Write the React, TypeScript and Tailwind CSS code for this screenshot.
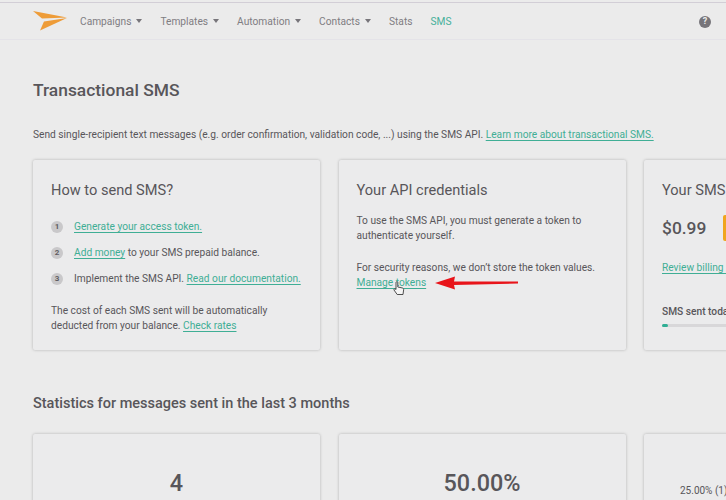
const navItems = [
  { label: 'Campaigns', caret: true },
  { label: 'Templates', caret: true },
  { label: 'Automation', caret: true },
  { label: 'Contacts', caret: true },
  { label: 'Stats', caret: false },
];

const linkClass = 'text-[#3fae95] underline decoration-[#3fae95] underline-offset-2';

function Caret() {
  return <span className="ml-[5px] h-0 w-0 border-x-[3.5px] border-t-[4px] border-x-transparent border-t-[#77757a]" />;
}

function Logo() {
  return (
    <svg width="35" height="20" viewBox="0 0 35 20" className="shrink-0">
      <path d="M0 0 L34 6.5 L9 7.5 Z" fill="#ee9c38" />
      <path d="M7 19.5 L34 7 L11 10.5 Z" fill="#ee9c38" />
    </svg>
  );
}

function StepBadge({ n }: { n: number }) {
  return (
    <span className="flex h-[12px] w-[12px] shrink-0 items-center justify-center rounded-full bg-[#c9c8ca] text-[8px] font-bold text-[#5f5d62]">
      {n}
    </span>
  );
}

function Card({ children, className = '' }: { children?: React.ReactNode; className?: string }) {
  return (
    <div className={`relative w-[287px] shrink-0 rounded-[2px] bg-[#ebebec] shadow-[0_0_3px_rgba(0,0,0,0.25)] ${className}`}>
      {children}
    </div>
  );
}

export default function App() {
  return (
    <div className="h-[500px] w-[726px] overflow-hidden bg-[#ebebeb] font-['Roboto',sans-serif] text-[#58565a]">
      {/* Header */}
      <div className="mt-[2px] h-[1px] bg-[#d2ced6]" />
      <div className="flex h-[37px] items-center border-b border-[#e4e3e8] pl-[33px] pr-[15px]">
        <Logo />
        <nav className="ml-[12px] flex items-center gap-[18px] pt-[1px] text-[10.2px] text-[#7f7d82]">
          {navItems.map((item) => (
            <span key={item.label} className="flex items-center">
              {item.label}
              {item.caret && <Caret />}
            </span>
          ))}
          <span className="text-[#46b09a]">SMS</span>
        </nav>
        <span className="ml-auto mt-[1px] flex h-[12px] w-[12px] items-center justify-center rounded-full bg-[#77757a] text-[9px] font-bold text-[#ebebeb]">
          ?
        </span>
      </div>

      <div className="pl-[33px]">
        <h1 className="mt-[39px] text-[17.4px] font-medium leading-[22px]">Transactional SMS</h1>
        <p className="mt-[27px] whitespace-nowrap text-[10.2px] leading-[14px]">
          Send single-recipient text messages (e.g. order confirmation, validation code, ...) using the SMS API.{' '}
          <span className={linkClass}>Learn more about transactional SMS.</span>
        </p>

        <div className="mt-[18px] flex gap-[18.5px]">
          <Card className="h-[190px] px-[18px] pt-[21px]">
            <h2 className="text-[14.6px] leading-[18px]">How to send SMS?</h2>
            <div className="mt-[20px] flex flex-col gap-[11px] text-[10.2px] leading-[15px]">
              <div className="flex items-center gap-[11px]">
                <StepBadge n={1} />
                <span className={linkClass}>Generate your access token.</span>
              </div>
              <div className="flex items-center gap-[11px]">
                <StepBadge n={2} />
                <span>
                  <span className={linkClass}>Add money</span> to your SMS prepaid balance.
                </span>
              </div>
              <div className="flex items-center gap-[11px]">
                <StepBadge n={3} />
                <span>
                  Implement the SMS API. <span className={linkClass}>Read our documentation.</span>
                </span>
              </div>
            </div>
            <p className="mt-[18px] text-[10.2px] leading-[14.5px]">
              The cost of each SMS sent will be automatically deducted from your balance.{' '}
              <span className={linkClass}>Check rates</span>
            </p>
          </Card>

          <Card className="h-[190px] px-[18px] pt-[21px]">
            <h2 className="text-[14.6px] leading-[18px]">Your API credentials</h2>
            <p className="mt-[14px] text-[10.2px] leading-[15px]">
              To use the SMS API, you must generate a token to authenticate yourself.
            </p>
            <p className="mt-[17px] text-[10.2px] leading-[15px]">
              For security reasons, we don’t store the token values.
              <br />
              <span className={linkClass}>Manage tokens</span>
            </p>
            {/* annotation arrow and cursor */}
            <svg width="84" height="14" viewBox="0 0 84 14" className="absolute left-[96px] top-[116px]">
              <path d="M0 7 L20 0.5 L19 5.5 L83 5.5 L83 7.5 L19 9 L20 13.5 Z" fill="#e8141a" />
            </svg>
            <svg width="12" height="15" viewBox="0 0 12 15" className="absolute left-[54px] top-[121px]">
              <path
                d="M3 1.5 C3 0.5 4.8 0.5 4.8 1.5 V6 L9.5 7 C10.5 7.3 10.8 8 10.6 9 L10 13.5 H4.2 L1 9 C0.5 8 1.6 7.3 3 8.5 Z"
                fill="#f5f5f5"
                stroke="#3c3c3c"
                strokeWidth="0.9"
              />
            </svg>
          </Card>

          <Card className="h-[190px] px-[18px] pt-[21px]">
            <h2 className="whitespace-nowrap text-[14.6px] leading-[18px]">Your SMS balance</h2>
            <div className="mt-[16px] flex items-center gap-[17px]">
              <span className="text-[17.4px] font-medium leading-[26px]">$0.99</span>
              <span className="h-[26px] w-[60px] rounded-[2px] bg-[#f0a51e]" />
            </div>
            <p className={`mt-[19px] whitespace-nowrap text-[10.2px] leading-[15px] ${linkClass}`}>Review billing history</p>
            <p className="mt-[29px] whitespace-nowrap text-[10.2px] font-medium leading-[15px]">SMS sent today</p>
            <div className="mt-[5px] h-[3px] w-[240px] rounded-full bg-[#d8d7d9]">
              <div className="h-[3px] w-[6px] rounded-full bg-[#2fae94]" />
            </div>
          </Card>
        </div>

        <h3 className="mt-[45px] text-[14.5px] font-medium leading-[18px]">Statistics for messages sent in the last 3 months</h3>

        <div className="mt-[21px] flex gap-[18.5px]">
          <Card className="flex h-[100px] justify-center pt-[34px]">
            <span className="text-[23.4px] font-medium leading-[30px]">4</span>
          </Card>
          <Card className="flex h-[100px] justify-center pt-[34px]">
            <span className="text-[23.4px] font-medium leading-[30px]">50.00%</span>
          </Card>
          <Card className="h-[100px] pl-[36px] pt-[43px]">
            <span className="whitespace-nowrap text-[10px] leading-[14px]">25.00% (1)</span>
          </Card>
        </div>
      </div>
    </div>
  );
}
